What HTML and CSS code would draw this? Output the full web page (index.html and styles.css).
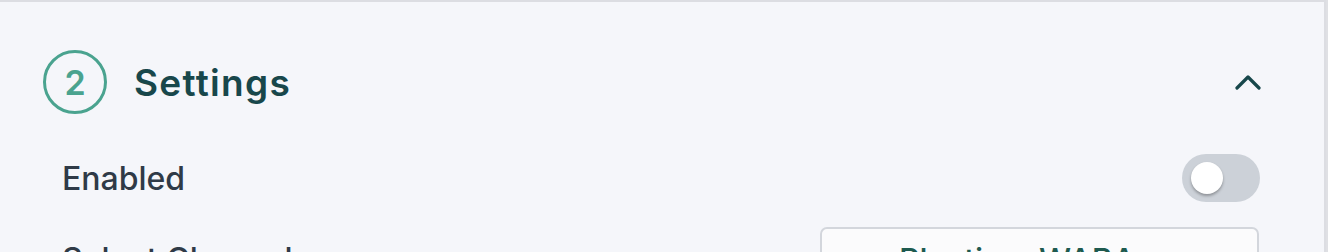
FILE: index.html
```html
<!DOCTYPE html>
<html lang="en">
<head>
  <meta charset="UTF-8" />
  <title>Settings</title>
  <link rel="stylesheet" href="styles.css">
</head>
<body>
  <section class="card">
    <div class="card-header">
      <span class="step">2</span>
      <h2 class="card-title">Settings</h2>
      <button class="collapse" aria-label="Collapse">
        <svg width="26" height="16" viewBox="0 0 26 16">
          <path d="M2 14 L13 3 L24 14" fill="none" stroke="#17474b" stroke-width="3.2" stroke-linecap="round" stroke-linejoin="round" />
        </svg>
      </button>
    </div>
    <div class="fields">
      <div class="field-row">
        <label class="field-label">Enabled</label>
        <span class="toggle"><span class="knob"></span></span>
      </div>
      <div class="field-row channel-row">
        <label class="field-label">Select Channel</label>
        <div class="select">Playtime WABA</div>
      </div>
    </div>
  </section>
</body>
</html>
```

FILE: styles.css
```css
* {
  margin: 0;
  padding: 0;
  box-sizing: border-box;
  font-family: Inter, "Noto Sans", sans-serif;
}

body {
  background-color: #dfe0e4;
  width: 1328px;
  height: 252px;
  overflow: hidden;
}

.card {
  background-color: #f5f6fa;
  border-top: 2px solid #dcdde2;
  border-right: 2px solid #dcdde2;
  width: 1326px;
  height: 252px;
  padding: 48px 64px 0 43px;
}

.card-header {
  display: flex;
  align-items: center;
  height: 64px;
}

.step {
  width: 64px;
  height: 64px;
  border: 3px solid #4aa38f;
  border-radius: 50%;
  color: #4aa38f;
  font-size: 34px;
  font-weight: 600;
  display: flex;
  align-items: center;
  justify-content: center;
}

.card-title {
  margin-left: 27px;
  font-size: 37px;
  font-weight: 600;
  letter-spacing: 1.3px;
  color: #18474b;
  flex: 1;
}

.collapse {
  background: none;
  border: none;
  width: 26px;
  height: 16px;
  margin-right: -1px;
  margin-top: -1px;
}

.collapse svg {
  display: block;
}

.fields {
  padding-left: 19px;
  margin-top: 40px;
}

.field-row {
  display: flex;
  align-items: center;
  justify-content: space-between;
}

.field-label {
  font-size: 32px;
  font-weight: 500;
  color: #2f3a47;
}

.toggle {
  width: 78px;
  height: 48px;
  border-radius: 24px;
  background-color: #ccd1d8;
  display: flex;
  align-items: center;
  padding-left: 9px;
}

.knob {
  width: 32px;
  height: 32px;
  border-radius: 50%;
  background: #fff;
  box-shadow: 0 2px 3px rgba(0, 0, 0, 0.3);
}

.channel-row {
  margin-top: 25px;
  align-items: flex-start;
}

.channel-row .field-label {
  margin-top: 13px;
}

.select {
  width: 439px;
  height: 64px;
  border: 2px solid #d3d6dc;
  border-radius: 7px;
  background: #fbfbfc;
  color: #1e5a4f;
  font-size: 32px;
  font-weight: 500;
  padding: 12px 0 0 77px;
  margin-right: 1px;
}
```
